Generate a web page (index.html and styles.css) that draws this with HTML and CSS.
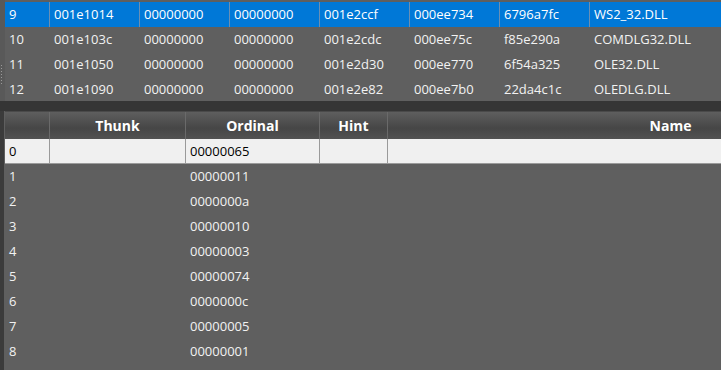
FILE: index.html
```html
<!DOCTYPE html>
<html>
<head>
<meta charset="utf-8">
<link rel="stylesheet" href="styles.css">
</head>
<body>
<div class="app">
  <div class="top-pane">
    <div class="grip"><span></span><span></span><span></span><span></span><span></span><span></span><span></span></div>
    <div class="top-table">
      <div class="trow selected">
        <div class="c">9</div><div class="c">001e1014</div><div class="c">00000000</div><div class="c">00000000</div><div class="c">001e2ccf</div><div class="c">000ee734</div><div class="c">6796a7fc</div><div class="c">WS2_32.DLL</div>
      </div>
      <div class="trow">
        <div class="c">10</div><div class="c">001e103c</div><div class="c">00000000</div><div class="c">00000000</div><div class="c">001e2cdc</div><div class="c">000ee75c</div><div class="c">f85e290a</div><div class="c">COMDLG32.DLL</div>
      </div>
      <div class="trow">
        <div class="c">11</div><div class="c">001e1050</div><div class="c">00000000</div><div class="c">00000000</div><div class="c">001e2d30</div><div class="c">000ee770</div><div class="c">6f54a325</div><div class="c">OLE32.DLL</div>
      </div>
      <div class="trow">
        <div class="c">12</div><div class="c">001e1090</div><div class="c">00000000</div><div class="c">00000000</div><div class="c">001e2e82</div><div class="c">000ee7b0</div><div class="c">22da4c1c</div><div class="c">OLEDLG.DLL</div>
      </div>
    </div>
  </div>
  <div class="divider"></div>
  <div class="bottom-pane">
    <div class="btable">
      <div class="brow head">
        <div class="h"></div><div class="h">Thunk</div><div class="h">Ordinal</div><div class="h">Hint</div><div class="h">Name</div>
      </div>
      <div class="brow current">
        <div class="b">0</div><div class="b"></div><div class="b">00000065</div><div class="b"></div><div class="b"></div>
      </div>
      <div class="brow"><div class="b">1</div><div class="b"></div><div class="b">00000011</div><div class="b"></div><div class="b"></div></div>
      <div class="brow"><div class="b">2</div><div class="b"></div><div class="b">0000000a</div><div class="b"></div><div class="b"></div></div>
      <div class="brow"><div class="b">3</div><div class="b"></div><div class="b">00000010</div><div class="b"></div><div class="b"></div></div>
      <div class="brow"><div class="b">4</div><div class="b"></div><div class="b">00000003</div><div class="b"></div><div class="b"></div></div>
      <div class="brow"><div class="b">5</div><div class="b"></div><div class="b">00000074</div><div class="b"></div><div class="b"></div></div>
      <div class="brow"><div class="b">6</div><div class="b"></div><div class="b">0000000c</div><div class="b"></div><div class="b"></div></div>
      <div class="brow"><div class="b">7</div><div class="b"></div><div class="b">00000005</div><div class="b"></div><div class="b"></div></div>
      <div class="brow"><div class="b">8</div><div class="b"></div><div class="b">00000001</div><div class="b"></div><div class="b"></div></div>
    </div>
  </div>
</div>
</body>
</html>
```
FILE: styles.css
```css
html, body {
  margin: 0;
  padding: 0;
  width: 721px;
  height: 370px;
  overflow: hidden;
  background: #5f5f5f;
  font-family: "Open Sans", "Noto Sans", sans-serif;
  font-size: 13px;
}
.app {
  display: flex;
  flex-direction: column;
  width: 721px;
  height: 370px;
}
.top-pane {
  display: flex;
  height: 101px;
  background: #5f5f5f;
  flex: none;
}
.grip {
  width: 5px;
  flex: none;
  display: flex;
  flex-direction: column;
  align-items: flex-start;
  justify-content: center;
  gap: 2px;
  padding-top: 48px;
  box-sizing: border-box;
  background: #595959;
}
.grip span {
  display: block;
  width: 1px;
  height: 1px;
  margin-left: 1px;
  background: #9a9a9a;
}
.top-table {
  flex: 1;
  padding-top: 2px;
  overflow: hidden;
}
.trow {
  display: grid;
  grid-template-columns: 44px repeat(6, 89px) 140px;
  column-gap: 1px;
  height: 25px;
  color: #f2f2f2;
}
.trow .c {
  padding-left: 4px;
  line-height: 25px;
  white-space: nowrap;
  overflow: hidden;
}
.trow.selected .c {
  background: #0078d7;
  color: #ffffff;
}
.trow.selected {
  background: #6a8fb3;
}
.divider {
  height: 10px;
  background: #353535;
  flex: none;
}
.bottom-pane {
  flex: 1;
  display: flex;
  border-left: 4px solid #3b3b3b;
  background: #5f5f5f;
  overflow: hidden;
}
.btable {
  padding-left: 1px;
}
.brow {
  display: grid;
  grid-template-columns: 45px 136px 134px 68px 566px;
  height: 25px;
  color: #f2f2f2;
}
.brow .b {
  padding-left: 4px;
  line-height: 25px;
  white-space: nowrap;
}
.brow.head {
  height: 27px;
  background: linear-gradient(#5e5e5e 0%, #525252 30%, #464646 60%, #525252 100%);
  border-top: 1px solid #4a4a4a;
}
.brow.head .h {
  color: #ffffff;
  font-weight: bold;
  text-align: center;
  line-height: 27px;
  border-right: 1px solid #6a6a6a;
  font-size: 14px;
}
.brow.current {
  height: 24px;
  background: #f0f0f0;
  color: #000000;
  border-bottom: 1px solid #9a9a9a;
}
.brow.current .b {
  border-right: 1px solid #9a9a9a;
  line-height: 24px;
}
```
